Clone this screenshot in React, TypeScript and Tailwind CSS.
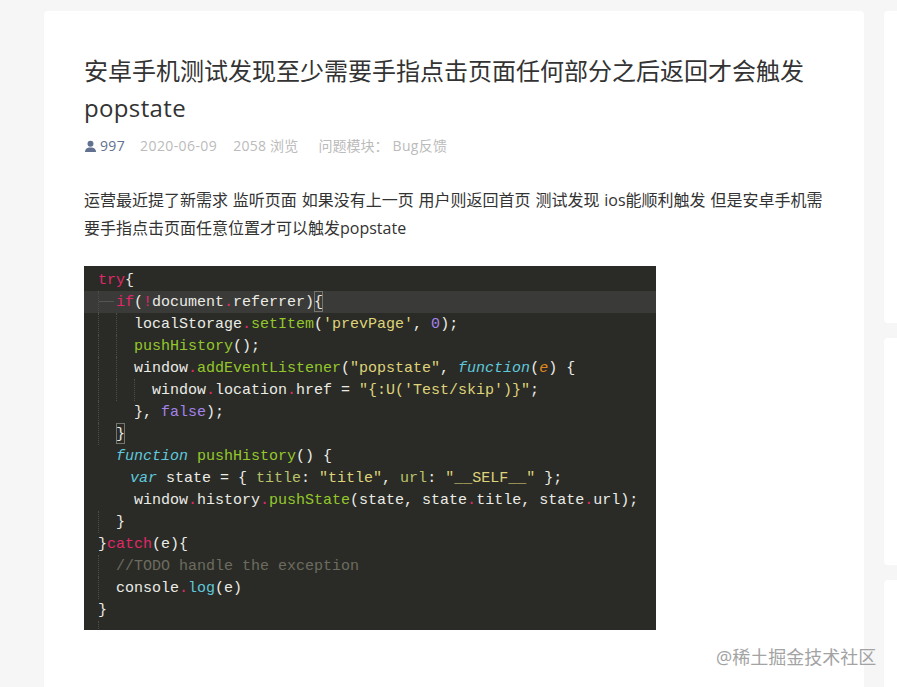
const sans = "font-['Open_Sans','Noto_Sans_CJK_SC',sans-serif]";

type Token = [string, string?];
type Line = { guides: boolean[]; tokens: Token[]; nudge?: boolean; active?: boolean };

const red = "text-[#e0286a]";
const green = "text-[#94c72c]";
const yellow = "text-[#dfd37a]";
const olive = "text-[#b9c26a]";
const blue = "text-[#5fc8dc]";
const purple = "text-[#a583ec]";
const white = "text-[#ecece6]";
const grey = "text-[#6d6c60]";
const fn = "text-[#5fc8dc] italic";
const bracket = "inline-block h-[21px] text-[#ecece6] ring-1 ring-inset ring-[#757570]";

// guides = one 18px indent cell per level, true when it shows a dotted line
const lines: Line[] = [
  { guides: [], tokens: [["try", red], ["{"]] },
  {
    guides: [true],
    active: true,
    tokens: [["if", red], ["("], ["!", red], ["document"], [".", red], ["referrer"], [")"], ["{", bracket]],
  },
  {
    guides: [true, true],
    tokens: [["localStorage"], [".", red], ["setItem", green], ["("], ["'prevPage'", yellow], [", "], ["0", purple], [");"]],
  },
  { guides: [true, true], tokens: [["pushHistory", green], ["();"]] },
  {
    guides: [true, true],
    tokens: [
      ["window"],
      [".", red],
      ["addEventListener", green],
      ["("],
      ['"popstate"', yellow],
      [", "],
      ["function", fn],
      ["("],
      ["e", "text-[#e08a1e] italic"],
      [") {"],
    ],
  },
  {
    guides: [true, true, true],
    tokens: [["window"], [".", red], ["location"], [".", red], ["href = "], ["\"{:U('Test/skip')}\"", yellow], [";"]],
  },
  { guides: [true, false], tokens: [["}, "], ["false", purple], [");"]] },
  { guides: [true], tokens: [["}", bracket]] },
  { guides: [false], tokens: [["function", fn], [" "], ["pushHistory", green], ["() {"]] },
  {
    guides: [false],
    nudge: true,
    tokens: [
      ["var", fn],
      [" state = { "],
      ["title", olive],
      [": "],
      ['"title"', yellow],
      [", "],
      ["url", olive],
      [": "],
      ['"__SELF__"', yellow],
      [" };"],
    ],
  },
  {
    guides: [false, false],
    tokens: [
      ["window"],
      [".", red],
      ["history"],
      [".", red],
      ["pushState", green],
      ["(state, state"],
      [".", red],
      ["title, state"],
      [".", red],
      ["url);"],
    ],
  },
  { guides: [true], tokens: [["}"]] },
  { guides: [], tokens: [["}"], ["catch", red], ["(e){"]] },
  { guides: [true], tokens: [["//TODO handle the exception", grey]] },
  { guides: [true], tokens: [["console"], [".", red], ["log", blue], ["(e)"]] },
  { guides: [], tokens: [["}"]] },
  { guides: [true], tokens: [] },
];

function CodeShot() {
  return (
    <div className="mt-6 h-[364px] w-[572px] overflow-hidden bg-[#2a2b26] pt-[3px] font-['Liberation_Mono',monospace] text-[15px]">
      {lines.map((line, i) => (
        <div key={i} className={`flex h-[22px] whitespace-pre pl-[14px] leading-[24px] ${line.active ? "bg-[#3a3a38]" : ""}`}>
          {line.guides.map((on, j) => (
            <div key={j} className={`h-full w-[18px] shrink-0 ${on ? "border-l border-dotted border-[#4d4e48]" : ""}`}>
              {line.active && <div className="mr-0.5 mt-[10px] h-px bg-[#55564f]" />}
            </div>
          ))}
          <div className={line.nudge ? "pl-[14px]" : ""}>
            {line.tokens.map(([text, color], j) => (
              <span key={j} className={color ?? white}>
                {text}
              </span>
            ))}
          </div>
        </div>
      ))}
    </div>
  );
}

export default function App() {
  return (
    <div className={`relative flex h-screen items-start overflow-hidden bg-[#f6f6f6] pl-[44px] pt-[11px] ${sans}`}>
      <main className="h-[700px] w-[820px] shrink-0 rounded-t-[4px] bg-white px-10 pt-[41px]">
        <h1 className="text-[24px] font-normal leading-[37px] text-[#333]">
          安卓手机测试发现至少需要手指点击页面任何部分之后返回才会触发 <span className="tracking-[0.35px]">popstate</span>
        </h1>
        <div className="mt-2.5 flex h-5 items-center text-[14px] leading-5 text-[#bbb]">
          <svg viewBox="0 0 14 14" className="h-[13px] w-[13px] fill-[#62718f]">
            <circle cx="7" cy="4" r="3.2" />
            <path d="M1 13c0-3 2.200-4.300 4.300-4.800h3.400C10.800 8.700 13 10 13 13z" />
          </svg>
          <span className="ml-[3px] tracking-[0.35px] text-[#62718f]">997</span>
          <span className="ml-[15px] tracking-[0.4px]">2020-06-09</span>
          <span className="ml-4 tracking-[0.25px]">2058 浏览</span>
          <span className="ml-5">问题模块：</span>
          <span className="ml-1 tracking-[0.3px]">Bug反馈</span>
        </div>
        <p className="mt-[30px] text-[16px] leading-[28px] text-[#333] [word-spacing:0.7px]">
          运营最近提了新需求 监听页面 如果没有上一页 用户则返回首页 测试发现 ios能顺利触发 但是安卓手机需要手指点击页面任意位置才可以触发popstate
        </p>
        <CodeShot />
      </main>
      <aside className="ml-5 flex w-[240px] shrink-0 flex-col gap-[15px]">
        <div className="h-[312px] rounded-[4px] bg-white" />
        <div className="h-[227px] rounded-[4px] bg-white" />
        <div className="h-[300px] rounded-[4px] bg-white" />
      </aside>
      <div className="absolute left-[716px] top-[645px] text-[18px] leading-6 text-[#a3a3a3]">@稀土掘金技术社区</div>
    </div>
  );
}
